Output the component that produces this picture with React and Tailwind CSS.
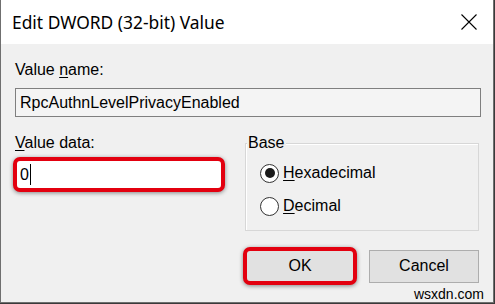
import React from "react";

function Radio({ checked, underline, rest }) {
  return (
    <div className="flex items-center h-[20px]">
      <span className="w-[19px] h-[19px] shrink-0 rounded-full border-[1.5px] border-[#333333] bg-white flex items-center justify-center">
        {checked && <span className="w-[10px] h-[10px] rounded-full bg-[#1a1a1a]" />}
      </span>
      <span className="ml-[4px] text-[16px] leading-[18px] text-black">
        <span className="underline underline-offset-2">{underline}</span>
        {rest}
      </span>
    </div>
  );
}

export default function App() {
  return (
    <div className="w-[495px] h-[304px] bg-[#3a3a3a] relative overflow-hidden" style={{ fontFamily: '"Liberation Sans", Arial, sans-serif' }}>
      <div className="w-[494px] h-[303px] border-x border-b border-[#6f6f6f] flex flex-col bg-[#f0f0f0]">
        {/* Title bar */}
        <div className="h-[44px] bg-white flex items-center justify-between pl-[11px] pr-[15px] shrink-0">
          <span className="text-[17.4px] text-black pt-[1px]" style={{ fontFamily: '"Noto Sans", "Open Sans", sans-serif' }}>
            Edit DWORD (32-bit) Value
          </span>
          <svg width="16" height="16" viewBox="0 0 16 16" className="mr-[1px]">
            <path d="M0.5 0.5 L15.5 15.5 M15.5 0.5 L0.5 15.5" stroke="#000" strokeWidth="1.1" fill="none" />
          </svg>
        </div>

        {/* Body */}
        <div className="flex-1 px-[14px] pt-[17px]">
          <div className="text-[16px] leading-[18px] text-black">
            Value <span className="underline underline-offset-2">n</span>ame:
          </div>
          <div className="mt-[9px] h-[29px] w-[466px] border border-[#7f7f7f] bg-[#f4f4f4] flex items-center pl-[4px] text-[16px] text-black">
            RpcAuthnLevelPrivacyEnabled
          </div>

          <div className="flex mt-[17px]">
            {/* Left column */}
            <div className="w-[213px] -ml-[2px]">
              <div className="ml-[2px] text-[16px] leading-[18px] text-black">
                <span className="underline underline-offset-2">V</span>alue data:
              </div>
              <div className="mt-[5px] h-[35px] rounded-[7px] border-[4px] border-[#e3000f] shadow-[0_1px_4px_rgba(0,0,0,0.45)] bg-white flex items-center pl-[3px]">
                <span className="text-[16px] text-black leading-none">0</span>
                <span className="w-[1px] h-[21px] bg-black ml-[1px]" />
              </div>
            </div>

            {/* Base group */}
            <div className="relative ml-[20px] mt-[9px] w-[235px] h-[88px] border border-[#d7d7d7] shadow-[inset_1px_1px_0_#ffffff]">
              <span className="absolute -top-[10px] left-[1px] px-[1px] bg-[#f0f0f0] text-[16px] leading-[18px] text-black">
                Base
              </span>
              <div className="pl-[14px] pt-[19px] flex flex-col gap-[13px]">
                <Radio checked underline="H" rest="exadecimal" />
                <Radio underline="D" rest="ecimal" />
              </div>
            </div>
          </div>

          {/* Buttons */}
          <div className="flex justify-end items-center mt-[16px]">
            <div className="w-[114px] h-[38px] rounded-[7px] border-[4px] border-[#e3000f] shadow-[0_1px_4px_rgba(0,0,0,0.45)] bg-[#e1e1e1] flex items-center justify-center">
              <span className="text-[16px] text-black">OK</span>
            </div>
            <div className="ml-[12px] w-[110px] h-[33px] border border-[#adadad] bg-[#e1e1e1] flex items-center justify-center">
              <span className="text-[16px] text-black">Cancel</span>
            </div>
          </div>
        </div>
      </div>

      {/* watermark */}
      <div className="absolute right-[8px] bottom-[2px] bg-[#f0f0f0] px-[3px] text-[14px] leading-[16px] text-black">
        wsxdn.com
      </div>
    </div>
  );
}
